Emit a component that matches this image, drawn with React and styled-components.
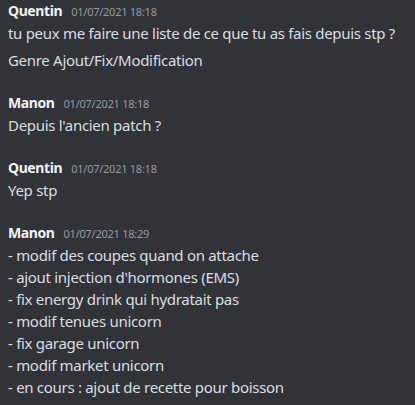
import React from "react";
import styled, { createGlobalStyle } from "styled-components";

const Global = createGlobalStyle`
  html, body { margin: 0; padding: 0; background: #313338; }
  body { width: 415px; height: 405px; overflow: hidden; }
`;

const Chat = styled.div`
  display: flex;
  flex-direction: column;
  padding: 0 8px;
  font-family: "Noto Sans", "Open Sans", sans-serif;
  background: #313338;
  min-height: 405px;
  box-sizing: border-box;
`;

const Group = styled.div`
  display: flex;
  flex-direction: column;
  margin-top: ${(p) => (p.$first ? "0" : "21px")};
`;

const Header = styled.div`
  display: flex;
  align-items: baseline;
  gap: 9px;
  line-height: 22px;
  height: 22px;
`;

const Name = styled.span`
  font-size: 14px;
  font-weight: 700;
  letter-spacing: -0.4px;
  color: #f2f3f5;
`;

const Time = styled.span`
  font-size: 11px;
  color: #949ba4;
  letter-spacing: -0.25px;
`;

const Line = styled.div`
  font-size: 15px;
  line-height: 22px;
  letter-spacing: -0.3px;
  color: #dbdee1;
  padding-top: ${(p) => (p.$split ? "5px" : "0")};
  white-space: nowrap;
`;

const messages = [
  {
    name: "Quentin",
    time: "01/07/2021 18:18",
    lines: [
      ["tu peux me faire une liste de ce que tu as fais depuis stp ?"],
      ["Genre Ajout/Fix/Modification"],
    ],
  },
  { name: "Manon", time: "01/07/2021 18:18", lines: [["Depuis l'ancien patch ?"]] },
  { name: "Quentin", time: "01/07/2021 18:18", lines: [["Yep stp"]] },
  {
    name: "Manon",
    time: "01/07/2021 18:29",
    lines: [
      [
        "- modif des coupes quand on attache",
        "- ajout injection d'hormones (EMS)",
        "- fix energy drink qui hydratait pas",
        "- modif tenues unicorn",
        "- fix garage unicorn",
        "- modif market unicorn",
        "- en cours : ajout de recette pour boisson",
      ],
    ],
  },
];

export default function App() {
  return (
    <>
      <Global />
      <Chat>
        {messages.map((m, i) => (
          <Group key={i} $first={i === 0}>
            <Header>
              <Name>{m.name}</Name>
              <Time>{m.time}</Time>
            </Header>
            {m.lines.map((msg, j) =>
              msg.map((t, k) => (
                <Line key={`${j}-${k}`} $split={j > 0 && k === 0}>
                  {t}
                </Line>
              ))
            )}
          </Group>
        ))}
      </Chat>
    </>
  );
}
